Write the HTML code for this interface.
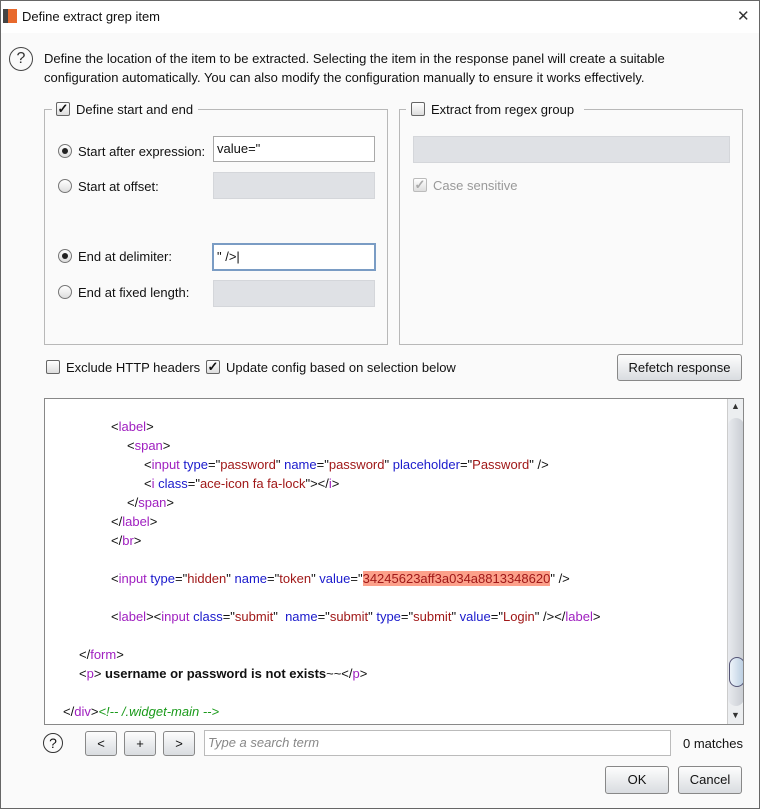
<!DOCTYPE html>
<html><head><style>
*{box-sizing:border-box;margin:0;padding:0}
body{width:760px;height:809px;background:#fafafa;font-family:"Liberation Sans",Arial,sans-serif;font-size:13px;color:#111;position:relative;overflow:hidden;box-shadow:inset 0 0 0 1px #666}
.a{position:absolute;white-space:nowrap}
.tb{position:absolute;left:1px;top:1px;width:758px;height:32px;background:#fff}
.fs{position:absolute;border:1px solid #b8b8b8}
.inp{position:absolute;height:26px;background:#fff;border:1px solid #a9a9a9;padding:4px 3px;font-size:13px}
.dis{position:absolute;background:#dfe1e5;border:1px solid #d4d6da}
.rad{position:absolute;width:14px;height:14px;border-radius:50%;border:1px solid #777;background:linear-gradient(#fff,#ddd)}
.rad.on::after{content:"";position:absolute;left:3px;top:3px;width:6px;height:6px;border-radius:50%;background:#222}
.cb{position:absolute;width:14px;height:14px;border:1px solid #666;border-radius:2px;background:linear-gradient(#fff,#ddd);font-size:13px;line-height:12px;text-align:center;font-weight:bold}
.btn{position:absolute;border:1px solid #888;border-radius:3px;background:linear-gradient(#fdfdfd,#d9dce0);text-align:center;font-size:13px}
.code{position:absolute;left:44px;top:398px;width:700px;height:327px;background:#fff;border:1px solid #888;overflow:hidden;font-size:13px}
.code div{position:absolute;white-space:pre}
.t{color:#a020c0}.at{color:#1a1acc}.v{color:#a01818}.c{color:#1a9a1a;font-style:italic}
</style></head><body>
<div class="tb"></div>
<div class="a" style="left:3px;top:9px;width:14px;height:14px;background:#e8692c;border-left:5px solid #444"></div>
<div class="a" style="left:22px;top:9px;font-size:13px">Define extract grep item</div>
<div class="a" style="left:737px;top:7px;font-size:15px;color:#333">✕</div>

<div class="a" style="left:9px;top:47px;width:24px;height:24px;border:1.5px solid #444;border-radius:50%;text-align:center;line-height:21px;font-size:16px;color:#333">?</div>
<div class="a" style="left:44px;top:49px;line-height:19px">Define the location of the item to be extracted. Selecting the item in the response panel will create a suitable<br>configuration automatically. You can also modify the configuration manually to ensure it works effectively.</div>

<div class="fs" style="left:44px;top:109px;width:344px;height:236px"></div>
<div class="a" style="left:52px;top:101px;width:146px;height:16px;background:#fafafa"></div>
<div class="cb" style="left:56px;top:102px">✓</div>
<div class="a" style="left:76px;top:102px">Define start and end</div>

<div class="rad on" style="left:58px;top:144px"></div>
<div class="a" style="left:78px;top:144px">Start after expression:</div>
<div class="inp" style="left:213px;top:136px;width:162px">value="</div>
<div class="rad" style="left:58px;top:179px"></div>
<div class="a" style="left:78px;top:179px">Start at offset:</div>
<div class="dis" style="left:213px;top:172px;width:162px;height:27px"></div>
<div class="rad on" style="left:58px;top:249px"></div>
<div class="a" style="left:78px;top:249px">End at delimiter:</div>
<div class="inp" style="left:212px;top:243px;width:164px;height:28px;border:2px solid #7a9cc4">" /&gt;|</div>
<div class="rad" style="left:58px;top:285px"></div>
<div class="a" style="left:78px;top:285px">End at fixed length:</div>
<div class="dis" style="left:213px;top:280px;width:162px;height:27px"></div>

<div class="fs" style="left:399px;top:109px;width:344px;height:236px"></div>
<div class="a" style="left:406px;top:101px;width:178px;height:16px;background:#fafafa"></div>
<div class="cb" style="left:411px;top:102px"></div>
<div class="a" style="left:431px;top:102px">Extract from regex group</div>
<div class="dis" style="left:413px;top:136px;width:317px;height:27px"></div>
<div class="cb" style="left:413px;top:178px;border-color:#bbb;color:#aaa">✓</div>
<div class="a" style="left:433px;top:178px;color:#999">Case sensitive</div>

<div class="cb" style="left:46px;top:360px"></div>
<div class="a" style="left:66px;top:360px">Exclude HTTP headers</div>
<div class="cb" style="left:206px;top:360px">✓</div>
<div class="a" style="left:226px;top:360px">Update config based on selection below</div>
<div class="btn" style="left:617px;top:354px;width:125px;height:27px;line-height:25px">Refetch response</div>

<div class="code">
<div style="left:66px;top:20px"><span>&lt;</span><span class="t">label</span>&gt;</div>
<div style="left:82px;top:39px">&lt;<span class="t">span</span>&gt;</div>
<div style="left:99px;top:58px">&lt;<span class="t">input</span> <span class="at">type</span>="<span class="v">password</span>" <span class="at">name</span>="<span class="v">password</span>" <span class="at">placeholder</span>="<span class="v">Password</span>" /&gt;</div>
<div style="left:99px;top:77px">&lt;<span class="t">i</span> <span class="at">class</span>="<span class="v">ace-icon fa fa-lock</span>"&gt;&lt;/<span class="t">i</span>&gt;</div>
<div style="left:82px;top:96px">&lt;/<span class="t">span</span>&gt;</div>
<div style="left:66px;top:115px">&lt;/<span class="t">label</span>&gt;</div>
<div style="left:66px;top:134px">&lt;/<span class="t">br</span>&gt;</div>
<div style="left:66px;top:172px">&lt;<span class="t">input</span> <span class="at">type</span>="<span class="v">hidden</span>" <span class="at">name</span>="<span class="v">token</span>" <span class="at">value</span>="<span class="v" style="background:#fca08a">34245623aff3a034a8813348620</span>" /&gt;</div>
<div style="left:66px;top:210px">&lt;<span class="t">label</span>&gt;&lt;<span class="t">input</span> <span class="at">class</span>="<span class="v">submit</span>"  <span class="at">name</span>="<span class="v">submit</span>" <span class="at">type</span>="<span class="v">submit</span>" <span class="at">value</span>="<span class="v">Login</span>" /&gt;&lt;/<span class="t">label</span>&gt;</div>
<div style="left:34px;top:248px">&lt;/<span class="t">form</span>&gt;</div>
<div style="left:34px;top:267px">&lt;<span class="t">p</span>&gt; <b>username or password is not exists</b>~~&lt;/<span class="t">p</span>&gt;</div>
<div style="left:18px;top:305px">&lt;/<span class="t">div</span>&gt;<span class="c">&lt;!-- /.widget-main --&gt;</span></div>
<div style="left:682px;top:0;width:17px;height:325px;background:#eceef0;border-left:1px solid #ccc"></div>
<div style="left:683px;top:19px;width:16px;height:288px;background:linear-gradient(90deg,#e8eaee,#c8ccd2);border-radius:8px"></div>
<div style="left:684px;top:258px;width:16px;height:30px;background:linear-gradient(90deg,#eef4fa,#b8cce0);border:1px solid #557;border-radius:10px"></div>
<div style="left:686px;top:2px;font-size:9px;color:#333">▲</div>
<div style="left:686px;top:311px;font-size:9px;color:#333">▼</div>
</div>

<div class="a" style="left:43px;top:733px;width:20px;height:20px;border:1.3px solid #333;border-radius:50%;text-align:center;line-height:18px;font-size:14px">?</div>
<div class="btn" style="left:85px;top:731px;width:32px;height:25px;line-height:23px">&lt;</div>
<div class="btn" style="left:124px;top:731px;width:32px;height:25px;line-height:23px">+</div>
<div class="btn" style="left:163px;top:731px;width:32px;height:25px;line-height:23px">&gt;</div>
<div class="inp" style="left:204px;top:730px;width:467px;height:26px;font-style:italic;color:#888;border-color:#bbb">Type a search term</div>
<div class="a" style="left:683px;top:736px">0 matches</div>
<div class="btn" style="left:605px;top:766px;width:64px;height:28px;line-height:26px">OK</div>
<div class="btn" style="left:678px;top:766px;width:64px;height:28px;line-height:26px">Cancel</div>
</body></html>
